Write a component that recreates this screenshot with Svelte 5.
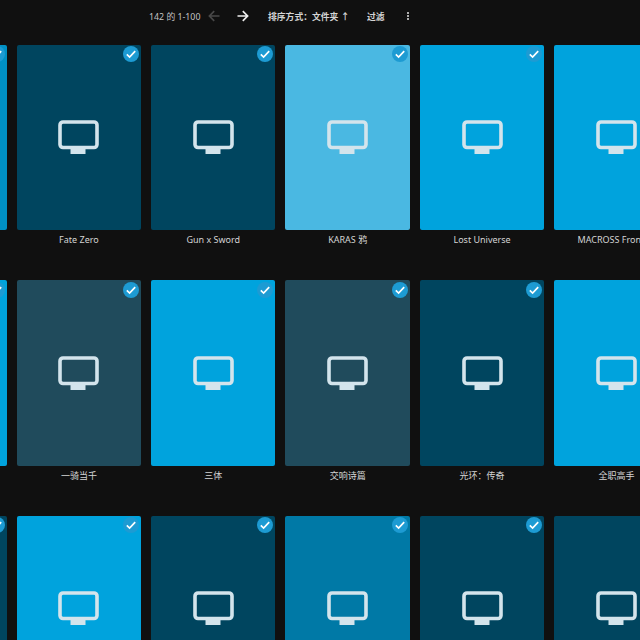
<script>
	const rows = [
		[
			{ title: "", color: "#0090c4" },
			{ title: "Fate Zero", color: "#00455f" },
			{ title: "Gun x Sword", color: "#00455f" },
			{ title: "KARAS 鸦", color: "#4ab8e2" },
			{ title: "Lost Universe", color: "#00a3dd" },
			{ title: "MACROSS Frontier", color: "#00a3dd" }
		],
		[
			{ title: "", color: "#00a3dd" },
			{ title: "一骑当千", color: "#204b5c" },
			{ title: "三体", color: "#00a3dd" },
			{ title: "交响诗篇", color: "#204b5c" },
			{ title: "光环：传奇", color: "#00455f" },
			{ title: "全职高手", color: "#00a3dd" }
		],
		[
			{ title: "", color: "#00455f" },
			{ title: "", color: "#00a3dd" },
			{ title: "", color: "#00455f" },
			{ title: "", color: "#0079a6" },
			{ title: "", color: "#00455f" },
			{ title: "", color: "#00455f" }
		]
	];
	const items = rows.flat();
</script>

<main class="page">
	<header class="toolbar">
		<span class="count">142 的 1-100</span>
		<button class="arrow off" aria-label="上一页">
			<svg viewBox="0 0 12 12"><path d="M11.5 6H1.5M6.2 1.2 1.4 6l4.8 4.8" /></svg>
		</button>
		<button class="arrow" aria-label="下一页">
			<svg viewBox="0 0 12 12"><path d="M.5 6h10M5.8 1.2 10.6 6l-4.8 4.8" /></svg>
		</button>
		<span class="sort">排序方式：文件夹 ↑</span>
		<span class="filter">过滤</span>
		<span class="more" aria-hidden="true"><i></i><i></i><i></i></span>
	</header>

	<section class="grid">
		{#each items as item}
			<article class="item">
				<div class="card" style="background: {item.color}">
					<span class="check">
						<svg viewBox="0 0 16 16"><path d="M3.8 8.4l2.8 2.6 5.6-5.8" /></svg>
					</span>
					<svg class="tv" viewBox="0 0 41 34">
						<rect x="2" y="2" width="37" height="25.5" rx="3" />
						<path class="stand" d="M12.5 29h15v5h-15z" />
					</svg>
				</div>
				<p class="title">{item.title}</p>
			</article>
		{/each}
	</section>
</main>

<style>
	:global(body) {
		margin: 0;
		background: #101010;
	}
	.page {
		width: 640px;
		height: 640px;
		overflow: hidden;
		background: #101010;
		font-family: "Noto Sans", "Noto Sans CJK SC", sans-serif;
		color: #ddd;
	}
	.toolbar {
		height: 44.6px;
		box-sizing: border-box;
		padding: 0 0 12.6px 149px;
		display: flex;
		align-items: center;
		font-size: 8.8px;
	}
	.count {
		color: #c4c4c4;
		width: 50px;
		white-space: nowrap;
	}
	.arrow {
		width: 12px;
		height: 12px;
		margin-left: 9px;
		padding: 0;
		background: none;
		border: 0;
		display: flex;
	}
	.arrow + .arrow {
		margin-left: 17px;
	}
	.arrow svg {
		width: 12px;
		height: 12px;
		fill: none;
		stroke: #eee;
		stroke-width: 1.7;
	}
	.arrow.off svg {
		stroke: #484848;
	}
	.sort {
		margin-left: 19px;
		width: 80px;
		font-weight: 700;
		color: #d4d4d4;
		white-space: nowrap;
	}
	.filter {
		margin-left: 19px;
		font-weight: 700;
		color: #d4d4d4;
	}
	.more {
		margin-left: 22px;
		display: flex;
		flex-direction: column;
		gap: 1.2px;
	}
	.more i {
		width: 2.2px;
		height: 2.2px;
		background: #e2e2e2;
		border-radius: 50%;
	}
	.grid {
		width: 820px;
		margin-left: -117.7px;
		display: grid;
		grid-template-columns: repeat(6, 124.4px);
		column-gap: 10px;
		grid-auto-rows: 235.5px;
	}
	.card {
		position: relative;
		height: 185.6px;
		border-radius: 2px;
		display: flex;
		align-items: center;
		justify-content: center;
	}
	.check {
		position: absolute;
		top: 1.5px;
		right: 2px;
		width: 16px;
		height: 16px;
		border-radius: 50%;
		background: #1d9bd3;
	}
	.check svg {
		display: block;
		fill: none;
		stroke: #fff;
		stroke-width: 1.7;
	}
	.tv {
		width: 41px;
		height: 34px;
		fill: none;
		stroke: #d3e4ec;
		stroke-width: 3.6;
	}
	.tv .stand {
		fill: #d3e4ec;
		stroke: none;
	}
	.title {
		margin: 3px 0 0;
		font-size: 9px;
		line-height: 14px;
		text-align: center;
		white-space: nowrap;
		color: #d4d4d4;
	}
</style>
